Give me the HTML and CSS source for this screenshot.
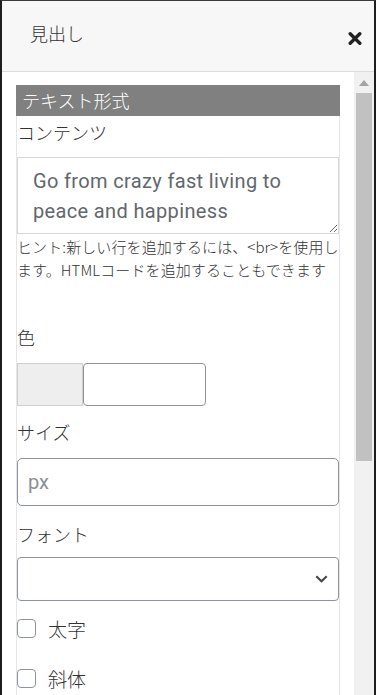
FILE: index.html
```html
<!DOCTYPE html>
<html lang="ja">
<head>
<meta charset="utf-8">
<title>見出し</title>
<link rel="stylesheet" href="styles.css">
</head>
<body>
<div class="window">
  <header class="head">
    <h1 class="title">見出し</h1>
    <button class="close" type="button" aria-label="close">
      <svg width="14" height="13" viewBox="0 0 14 13"><path d="M2.2 1.8 L11.8 11.2 M11.8 1.8 L2.2 11.2" stroke="#222" stroke-width="3.4" stroke-linecap="round" fill="none"/></svg>
    </button>
  </header>
  <div class="body">
    <div class="scroll">
      <section class="panel">
        <div class="panel-title">テキスト形式</div>
        <label class="label label-content">コンテンツ</label>
        <textarea class="textarea">Go from crazy fast living to peace and happiness</textarea>
        <p class="hint"><span class="hint-line">ヒント:新しい行を追加するには、&lt;br&gt;を使用し</span>ます。HTMLコードを追加することもできます</p>
        <label class="label label-color">色</label>
        <div class="color-row"><span class="swatch"></span><input class="color-input" type="text"></div>
        <label class="label label-size">サイズ</label>
        <input class="input" type="text" placeholder="px">
        <label class="label label-font">フォント</label>
        <div class="select">
          <svg width="13" height="8" viewBox="0 0 13 8"><path d="M1.3 1.3 L6.5 6.3 L11.7 1.3" stroke="#444" stroke-width="2" fill="none"/></svg>
        </div>
        <label class="check"><span class="box"></span><span>太字</span></label>
        <label class="check"><span class="box"></span><span>斜体</span></label>
      </section>
    </div>
    <div class="scrollbar">
      <div class="arrow"></div>
      <div class="thumb"></div>
    </div>
  </div>
</div>
</body>
</html>
```
FILE: styles.css
```css
* { box-sizing: border-box; }
html, body { margin: 0; padding: 0; background: #fff; }
body {
  font-family: "Noto Sans CJK JP", "Noto Sans", sans-serif;
  color: #333;
}
.window {
  width: 376px;
  height: 695px;
  border-left: 2px solid #1e1e1e;
  border-right: 2px solid #1e1e1e;
  border-top: 1px solid #3a3a3a;
  overflow: hidden;
  display: flex;
  flex-direction: column;
}
.head {
  height: 71px;
  flex: none;
  background: #f7f7f7;
  border-bottom: 1px solid #dcdcdc;
  display: flex;
  align-items: flex-start;
  justify-content: space-between;
  padding: 19px 12px 0 28px;
}
.title {
  margin: 0;
  font-size: 18px;
  line-height: 26px;
  font-weight: 300;
  color: #333;
}
.close {
  border: 0;
  background: none;
  padding: 0;
  margin-top: 12px;
  width: 14px;
  height: 13px;
  display: block;
}
.close svg { display: block; }
.body {
  flex: 1;
  min-height: 0;
  display: flex;
}
.scroll {
  flex: 1;
  overflow: hidden;
  padding: 13px 0 0 14px;
}
.panel {
  width: 324px;
  border-left: 1px solid #e6e6e6;
  border-right: 1px solid #e6e6e6;
  min-height: 700px;
}
.panel-title {
  margin: 0 -1px;
  height: 31px;
  line-height: 31px;
  background: #808080;
  color: #fff;
  font-size: 18px;
  font-weight: 300;
  padding-left: 6px;
}
.label {
  display: block;
  font-size: 18px;
  line-height: 26px;
  font-weight: 300;
  color: #333;
}
.label-content { margin-top: 3px; margin-bottom: 12px; }
.textarea {
  display: block;
  width: 100%;
  height: 77px;
  margin: 0;
  border: 1px solid #d5d9dd;
  border-radius: 0;
  padding: 8px 15px 7px;
  font-family: Roboto, "Noto Sans", sans-serif;
  font-size: 20px;
  letter-spacing: 0.35px;
  line-height: 30px;
  color: #62676c;
  overflow: hidden;
  resize: vertical;
  background: #fff;
}
.hint {
  margin: 1px 0 0;
  font-size: 15px;
  letter-spacing: 0.1px;
  line-height: 23px;
  font-weight: 300;
  color: #333;
}
.hint-line { display: block; white-space: nowrap; }
.label-color { margin-top: 43px; margin-bottom: 13px; }
.color-row {
  display: flex;
  height: 43px;
}
.swatch {
  width: 66px;
  background: #eeeeee;
  border: 1px solid #cfcfcf;
}
.color-input {
  width: 123px;
  height: 43px;
  margin: 0;
  border: 1px solid #8c939d;
  border-radius: 4px;
  background: #fff;
  padding: 0 8px;
  font-size: 16px;
}
.label-size { margin-top: 13px; margin-bottom: 13px; }
.input {
  display: block;
  width: 100%;
  height: 48px;
  margin: 0;
  border: 1px solid #8c939d;
  border-radius: 5px;
  padding: 0 10px;
  font-family: Roboto, "Noto Sans", sans-serif;
  font-size: 20px;
  color: #333;
  background: #fff;
}
.input::placeholder { color: #8a8f95; }
.label-font { margin-top: 15px; margin-bottom: 10px; }
.select {
  height: 44px;
  border: 1px solid #8c939d;
  border-radius: 4px;
  display: flex;
  align-items: center;
  justify-content: flex-end;
  padding-right: 10px;
}
.select svg { display: block; }
.check {
  display: flex;
  align-items: center;
  gap: 12px;
  height: 30px;
  font-size: 19px;
  font-weight: 300;
  color: #333;
  margin-bottom: 20px;
}
.select + .check { margin-top: 12px; }
.box {
  width: 19px;
  height: 19px;
  border: 1px solid #8c939d;
  border-radius: 4px;
  background: #fff;
  flex: none;
}
.scrollbar {
  width: 20px;
  flex: none;
  background: #f1f1f1;
  display: flex;
  flex-direction: column;
  align-items: center;
}
.arrow {
  width: 0;
  height: 0;
  margin-top: 8px;
  border-left: 5px solid transparent;
  border-right: 5px solid transparent;
  border-bottom: 6px solid #a3a3a3;
}
.thumb {
  margin-top: 7px;
  width: 16px;
  height: 368px;
  background: #c1c1c1;
}
```
